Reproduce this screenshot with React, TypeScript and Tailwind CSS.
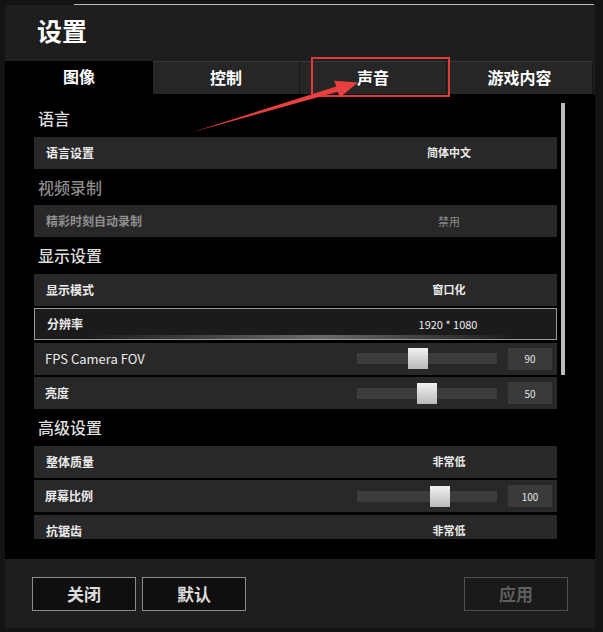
import React from "react";

const font = "font-['Noto_Sans_CJK_SC','Noto_Sans',sans-serif]";

function Header({ text, dim }: { text: string; dim?: boolean }) {
  return (
    <div className={`h-[31.5px] shrink-0 flex items-center pl-[4px] text-[16px] font-medium ${dim ? "text-[#8c8c8c]" : "text-[#dedede]"}`}>
      {text}
    </div>
  );
}

function Row({ label, value, dim, selected }: { label: string; value: string; dim?: boolean; selected?: boolean }) {
  return (
    <div
      className={`relative h-[32px] shrink-0 flex items-center ${selected ? "bg-[#1b1b1b] border border-[#9a9a9a]" : "bg-[#282828]"}`}
    >
      {selected && (
        <div className="absolute left-0 right-0 bottom-0 h-[4px] bg-[linear-gradient(90deg,rgba(255,255,255,0)_10%,rgba(255,255,255,0.35)_55%,rgba(255,255,255,0)_92%)]" />
      )}
      <div className={`flex-1 pl-[12px] text-[12px] font-bold ${dim ? "text-[#8f8f8f]" : "text-[#ececec]"}`}>{label}</div>
      <div
        className={`w-[216px] text-center text-[11px] ${selected ? "font-normal text-[#e0e0e0]" : "font-bold"} ${dim ? "text-[#8a8a8a] font-normal" : "text-[#ececec]"}`}
      >
        {value}
      </div>
    </div>
  );
}

function SliderRow({ label, value, thumb, labelClass }: { label: string; value: string; thumb: number; labelClass?: string }) {
  return (
    <div className="h-[32px] shrink-0 flex items-center bg-[#282828]">
      <div className={`flex-1 pl-[11px] ${labelClass ?? "text-[12px] font-bold"} text-[#ececec]`}>{label}</div>
      <div className="w-[216px] flex items-center">
        <div className="ml-[16px] w-[140px] h-[11px] bg-[#3c3c3c] relative">
          <div
            className="absolute top-[-5px] w-[20px] h-[21px] bg-[linear-gradient(180deg,#f2f2f2,#b9b9b9)]"
            style={{ left: thumb }}
          />
        </div>
        <div className="ml-[11px] w-[44px] h-[22px] bg-[#3a3a3a] flex items-center justify-center text-[10px] text-[#e6e6e6]">
          {value}
        </div>
      </div>
    </div>
  );
}

function Tab({ text, active, w }: { text: string; active?: boolean; w: string }) {
  return (
    <div
      className={`${w} h-full flex items-center justify-center pb-[3px] text-[16px] font-bold text-white ${
        active ? "bg-black" : "bg-[#262626] border-t border-[#3a3a3a] border-r border-r-[#151515]"
      }`}
    >
      {text}
    </div>
  );
}

function Btn({ text, disabled }: { text: string; disabled?: boolean }) {
  return (
    <div
      className={`w-[104px] h-[34px] flex items-center justify-center text-[17px] font-bold border ${
        disabled ? "border-[#505050] bg-[#1a1a1a] text-[#5e5e5e]" : "border-[#8c8c8c] bg-[#0f0f0f] text-[#dcdcdc]"
      }`}
    >
      {text}
    </div>
  );
}

export default function App() {
  return (
    <div className={`relative w-[603px] h-[632px] bg-[#131313] overflow-hidden ${font}`}>
      <div className="h-[5px] flex items-start">
        <div className="mt-[4px] ml-[74px] w-[520px] h-[1px] bg-[#bdbdbd]" />
      </div>
      <div className="ml-[5px] w-[590px] bg-[#1e1e1e]">
        <div className="h-[56px] flex items-center pl-[32px] pb-[4px] text-[25px] font-bold text-white">设置</div>
        <div className="h-[33px] flex">
          <Tab text="图像" active w="w-[148px]" />
          <Tab text="控制" w="w-[147px]" />
          <Tab text="声音" w="w-[147px]" />
          <Tab text="游戏内容" w="w-[146px]" />
        </div>
        <div className="h-[465px] bg-black flex">
          <div className="ml-[29px] w-[523px] h-[445px] overflow-hidden pt-[8.5px] flex flex-col gap-[2.5px]">
            <Header text="语言" />
            <Row label="语言设置" value="简体中文" />
            <Header text="视频录制" dim />
            <Row label="精彩时刻自动录制" value="禁用" dim />
            <Header text="显示设置" />
            <Row label="显示模式" value="窗口化" />
            <Row label="分辨率" value="1920 * 1080" selected />
            <SliderRow label="FPS Camera FOV" value="90" thumb={51} labelClass="text-[13px] font-normal" />
            <SliderRow label="亮度" value="50" thumb={60} />
            <Header text="高级设置" />
            <Row label="整体质量" value="非常低" />
            <SliderRow label="屏幕比例" value="100" thumb={73} />
            <Row label="抗锯齿" value="非常低" />
          </div>
          <div className="ml-[4px] mt-[9px] w-[4px] h-[272px] bg-[#bcbcbc]" />
        </div>
        <div className="h-[69px] flex items-start pt-[18px] px-[27px]">
          <div className="flex gap-[6px]">
            <Btn text="关闭" />
            <Btn text="默认" />
          </div>
          <div className="ml-auto">
            <Btn text="应用" disabled />
          </div>
        </div>
      </div>
      {/* annotation overlay */}
      <div className="absolute left-[311px] top-[57px] w-[139px] h-[40px] border-2 border-[#e2393d]" />
      <svg className="absolute left-0 top-0" width="603" height="632" viewBox="0 0 603 632">
        <polygon
          points="191,132.5 336.3,86.6 334.2,80.8 358,82.5 339.8,97.5 337.8,91.8"
          fill="#e8403f"
        />
      </svg>
    </div>
  );
}
